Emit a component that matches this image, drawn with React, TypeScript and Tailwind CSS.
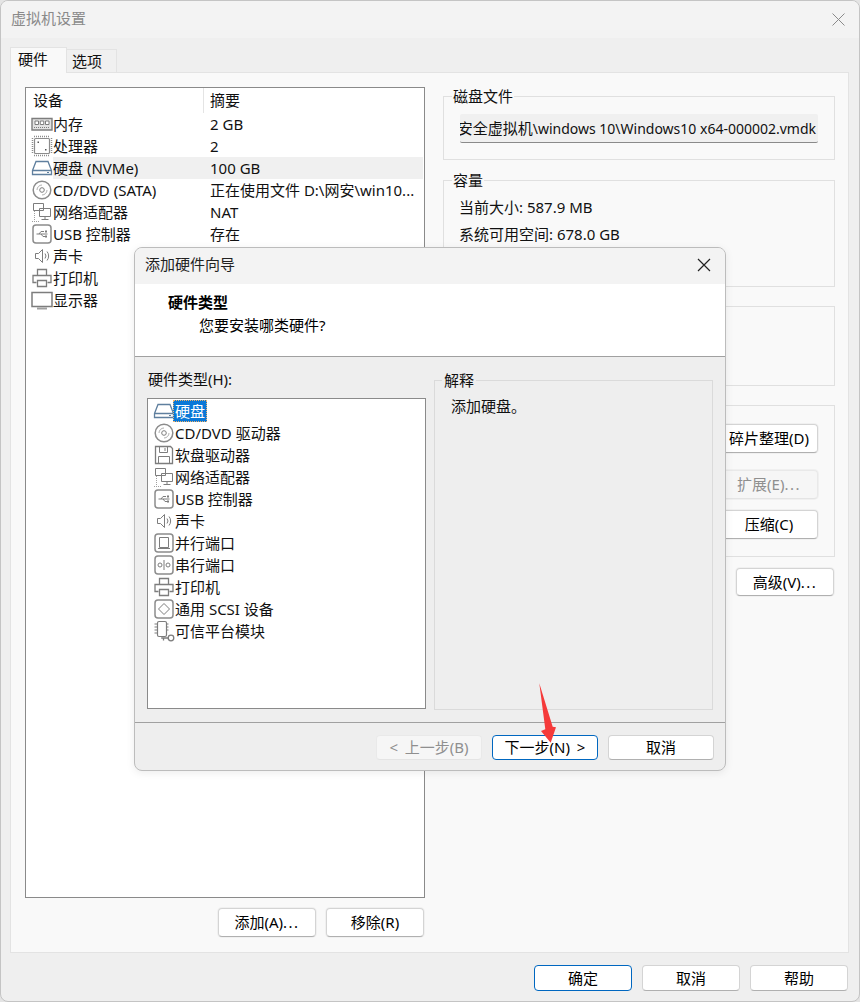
import type { ReactNode } from "react"

const G = "#7d7d7d"

function Ico({ children, className = "" }: { children: ReactNode; className?: string }) {
  return (
    <svg
      width="22"
      height="22"
      viewBox="0 0 22 22"
      fill="none"
      stroke={G}
      strokeWidth="1"
      className={`shrink-0 ${className}`}
    >
      {children}
    </svg>
  )
}

const MemoryIcon = () => (
  <Ico>
    <path d="M1 5.500h20v11.500h-20z" strokeWidth="1.400" fill="#e2e2e2" />
    <path d="M4 8h3.500v3.500h-3.500zM9.250 8h3.500v3.500h-3.500zM14.500 8h3.500v3.500h-3.500z" fill="#fff" />
    <path d="M3 14.500h16" strokeDasharray="1 1" />
  </Ico>
)
const CpuIcon = () => (
  <Ico>
    <rect x="3.500" y="3.500" width="15" height="15" rx="1" strokeWidth="1.200" stroke="#8c8c8c" />
    <path d="M3 1.500h16M3 20.500h16M1.500 3v16M20.500 3v16" strokeDasharray="1 1" strokeWidth="1.500" stroke="#8c8c8c" />
    <path d="M6.500 6.500h1.500v1.500h-1.500zM14 14h1.500v1.500h-1.500z" fill="#555" stroke="none" />
  </Ico>
)
const DiskIcon = () => (
  <Ico>
    <path d="M1.500 13.500L5 4.500h12l3.500 9v4h-19zM1.500 13.500h19" stroke="#5f7f9e" strokeWidth="1.300" />
    <path d="M16 15.500h2" stroke="#5f7f9e" />
  </Ico>
)
const CdIcon = () => (
  <Ico>
    <circle cx="11" cy="11" r="8.800" strokeWidth="1.500" stroke="#8c8c8c" />
    <circle cx="11" cy="11" r="2.300" />
    <path d="M6 11a5 5 0 0 1 5-5M16 11a5 5 0 0 1-5 5" stroke="#b0b0b0" />
  </Ico>
)
const NetIcon = () => (
  <Ico>
    <path d="M2.500 2.500h10v7h-10zM8.500 7.500h11v8h-11zM14 15.500v3M10.500 18.500h7" fill="#fff" />
    <path d="M1 20.500h7M3.500 10v10" strokeDasharray="1 1" stroke="#a0a0a0" />
  </Ico>
)
const UsbIcon = () => (
  <Ico>
    <rect x="2" y="2" width="18" height="18" rx="3" strokeWidth="1.500" stroke="#8c8c8c" />
    <path d="M5.500 11h11M8 11l2-2.500h3M10 11l2 2.500h2" />
    <path d="M14 7.500h2v2h-2zM14 12.500h2v2h-2z" fill={G} stroke="none" />
  </Ico>
)
const SoundIcon = () => (
  <Ico>
    <path d="M4.500 8.500h3l4-4v13l-4-4h-3z" />
    <path d="M14 8.500a4 4 0 0 1 0 5M16 6.500a7 7 0 0 1 0 9" />
  </Ico>
)
const PrinterIcon = () => (
  <Ico>
    <path d="M6.500 8.500v-6h9v6M5.500 15.500h-3.500v-7h18v7h-3.500" strokeWidth="1.300" />
    <path d="M6.500 13.500h9v6h-9z" strokeWidth="1.300" />
  </Ico>
)
const MonitorIcon = () => (
  <Ico>
    <path d="M1 3.500h20v14h-20z" strokeWidth="1.500" />
    <path d="M6 19.500h10" strokeWidth="2" stroke="#a0a0a0" />
  </Ico>
)
const FloppyIcon = () => (
  <Ico>
    <path d="M2.500 2.500h15l2 2v15h-17z" strokeWidth="1.300" />
    <path d="M6.500 2.500v6h8v-6M12 4v3M5.500 19.500v-7h11v7" />
  </Ico>
)
const ParallelIcon = () => (
  <Ico>
    <rect x="2" y="2" width="18" height="18" rx="3" strokeWidth="1.500" stroke="#8c8c8c" />
    <path d="M6.500 5.500h9v10h-9zM5 16.500h12" />
  </Ico>
)
const SerialIcon = () => (
  <Ico>
    <rect x="2" y="2" width="18" height="18" rx="3" strokeWidth="1.500" stroke="#8c8c8c" />
    <circle cx="7" cy="11" r="2" />
    <circle cx="15" cy="11" r="2" />
    <path d="M11 6v10" />
  </Ico>
)
const ScsiIcon = () => (
  <Ico>
    <rect x="2" y="2" width="18" height="18" rx="3" strokeWidth="1.500" stroke="#8c8c8c" />
    <path d="M11 5.500l5.500 5.500-5.500 5.500-5.500-5.500z" />
  </Ico>
)
const TpmIcon = () => (
  <Ico>
    <rect x="4.500" y="1.500" width="9" height="15" rx="1.500" strokeWidth="1.200" />
    <path d="M1.500 4h3M1.500 7h3M1.500 10h3M1.500 13h3M13.500 4h2M13.500 7h2M13.500 10h2" />
    <circle cx="18" cy="18" r="2.800" strokeWidth="1.300" />
    <path d="M15.200 18h-7M10.500 18v2.500" strokeWidth="1.300" />
  </Ico>
)

function Btn({
  children,
  kind = "normal",
  halo = false,
  className = "",
}: {
  children: ReactNode
  kind?: "normal" | "primary" | "disabled"
  halo?: boolean
  className?: string
}) {
  const look =
    kind === "primary"
      ? "border-[#0067c0] border-b-[#0067c0] text-black bg-white"
      : kind === "disabled"
        ? "border-[#e9e9e9] border-b-[#e4e4e4] text-[#8f8f8f] bg-[#f6f6f6]"
        : "border-[#d4d4d4] border-b-[#b0b0b0] text-black bg-white"
  return (
    <button
      className={`flex items-center justify-center rounded-[4px] border whitespace-pre ${look} ${
        halo ? "shadow-[0_0_0_1px_#f0f0f0]" : ""
      } ${className}`}
    >
      {children}
    </button>
  )
}

const Dots = () => <span className="tracking-[1.500px]">...</span>

const devices = [
  { icon: <MemoryIcon />, name: "内存", value: "2 GB" },
  { icon: <CpuIcon />, name: "处理器", value: "2" },
  { icon: <DiskIcon />, name: "硬盘 (NVMe)", value: "100 GB", selected: true },
  { icon: <CdIcon />, name: "CD/DVD (SATA)", value: "正在使用文件 D:\\网安\\win10..." },
  { icon: <NetIcon />, name: "网络适配器", value: "NAT" },
  { icon: <UsbIcon />, name: "USB 控制器", value: "存在" },
  { icon: <SoundIcon />, name: "声卡", value: "" },
  { icon: <PrinterIcon />, name: "打印机", value: "" },
  { icon: <MonitorIcon />, name: "显示器", value: "" },
]

const hardware = [
  { icon: <CdIcon />, name: "CD/DVD 驱动器" },
  { icon: <FloppyIcon />, name: "软盘驱动器" },
  { icon: <NetIcon />, name: "网络适配器" },
  { icon: <UsbIcon />, name: "USB 控制器" },
  { icon: <SoundIcon />, name: "声卡" },
  { icon: <ParallelIcon />, name: "并行端口" },
  { icon: <SerialIcon />, name: "串行端口" },
  { icon: <PrinterIcon />, name: "打印机" },
  { icon: <ScsiIcon />, name: "通用 SCSI 设备" },
  { icon: <TpmIcon />, name: "可信平台模块" },
]

function WizardDialog() {
  return (
    <div className="absolute left-[134px] top-[247px] flex h-[524px] w-[592px] flex-col overflow-hidden rounded-[8px] border border-[#bcbcbc] bg-[#eeeeee] shadow-[0_2px_8px_rgba(0,0,0,0.08)]">
      <div className="flex h-[36px] shrink-0 items-center justify-between bg-[#f3f3f3] pb-[2px] pl-[10px] pr-[14px] text-[#222]">
        <span className="-translate-y-[1px]">添加硬件向导</span>
        <svg width="14" height="14" viewBox="0 0 14 14" stroke="#222" strokeWidth="1.200">
          <path d="M1 1l12 12M13 1L1 13" />
        </svg>
      </div>
      <div className="h-[73px] shrink-0 border-b border-[#a0a0a0] bg-white pl-[33px] pt-[7px] text-black">
        <div className="h-[23px] font-bold leading-[23px]">硬件类型</div>
        <div className="ml-[31px] h-[23px] leading-[23px]">您要安装哪类硬件?</div>
      </div>
      <div className="flex h-[366px] shrink-0 border-b border-[#a0a0a0] px-[12px]">
        <div className="flex w-[279px] shrink-0 flex-col">
          <div className="h-[41px] pl-[1px] pt-[11px] leading-[22px]">硬件类型(H):</div>
          <div className="h-[311px] border border-[#8a8a8a] bg-white pl-[5px] pt-[1px]">
            <div className="flex h-[22px] items-center">
              <DiskIcon />
              <span className="ml-[-2px] flex h-[22px] items-center border border-dotted border-[#f2b36a] bg-[#0a78d7] px-[1px] text-white">
                硬盘
              </span>
            </div>
            {hardware.map((h) => (
              <div key={h.name} className="flex h-[22px] items-center whitespace-nowrap">
                {h.icon}
                <span>{h.name}</span>
              </div>
            ))}
          </div>
        </div>
        <fieldset className="ml-[8px] mt-[13px] h-[340px] w-[280px] min-w-0 border border-[#dadada] pl-[16px]">
          <legend className="ml-[-9px] px-[2px] leading-[20px]">解释</legend>
          <div className="mt-[5px] leading-[22px]">添加硬盘。</div>
        </fieldset>
      </div>
      <div className="flex flex-1 items-start justify-end gap-[10px] pr-[11px] pt-[12px]">
        <Btn kind="disabled" className="h-[25px] w-[106px] [word-spacing:3px]">&lt; 上一步(B)</Btn>
        <Btn kind="primary" className="h-[25px] w-[106px] [word-spacing:3px]">下一步(N) &gt;</Btn>
        <Btn className="h-[25px] w-[106px]">取消</Btn>
      </div>
    </div>
  )
}

export default function App() {
  return (
    <div className="relative h-[1002px] w-[860px] overflow-hidden bg-[#e4e4e4] font-['Noto_Sans','Noto_Sans_CJK_SC',sans-serif] text-[15px] text-[#111]">
      <div className="flex h-[1002px] flex-col overflow-hidden rounded-[8px] border border-[#c4c4c4] bg-[#efefef]">
        <div className="flex h-[37px] shrink-0 items-center justify-between bg-[#f3f3f3] pl-[10px] pr-[14px] text-[#8a8a8a]">
          <span className="-translate-y-[1px]">虚拟机设置</span>
          <svg width="13" height="13" viewBox="0 0 13 13" stroke="#8a8a8a" strokeWidth="1">
            <path d="M.5.5l12 12M12.500.5l-12 12" />
          </svg>
        </div>

        {/* tabs */}
        <div className="flex h-[34px] shrink-0 items-end pl-[9px]">
          <div className="relative z-10 mb-[-1px] flex h-[26px] w-[57px] items-start border border-b-0 border-[#e3e3e3] bg-[#f9f9f9] pl-[7px] leading-[22px]">
            硬件
          </div>
          <div className="flex h-[23px] w-[50px] items-center border border-b-0 border-l-0 border-[#e3e3e3] bg-[#f0f0f0] pl-[5px]">
            选项
          </div>
        </div>

        <div className="ml-[9px] flex h-[881px] w-[839px] shrink-0 border border-[#e3e3e3] bg-[#f9f9f9] pl-[14px] pt-[14px]">
          <div className="flex w-[400px] shrink-0 flex-col">
            <div className="flex h-[811px] flex-col border border-[#8a8a8a] bg-white">
              <div className="flex h-[25px] shrink-0 items-center pl-[7px]">
                <span className="w-[170px]">设备</span>
                <span className="h-[25px] w-[1px] bg-[#e4e4e4]" />
                <span className="pl-[6px]">摘要</span>
              </div>
              {devices.map((d) => (
                <div key={d.name} className="flex h-[22px] shrink-0 items-center whitespace-nowrap pl-[5px]">
                  {d.icon}
                  <div className={`mr-[1px] flex h-[22px] flex-1 items-center ${d.selected ? "bg-[#f0f0f0]" : ""}`}>
                    <span className="w-[157px]">{d.name}</span>
                    <span>{d.value}</span>
                  </div>
                </div>
              ))}
            </div>
            <div className="mt-[10px] flex justify-end gap-[10px] pr-[1px]">
              <Btn halo className="h-[29px] w-[98px]">添加(A)<Dots /></Btn>
              <Btn halo className="h-[29px] w-[98px]">移除(R)</Btn>
            </div>
          </div>

          <div className="ml-[18px] flex w-[392px] shrink-0 flex-col">
            <fieldset className="mt-[-1px] h-[74px] min-w-0 border border-[#e0e0e0] px-[16px]">
              <legend className="ml-[-8px] px-[1px] leading-[20px]">磁盘文件</legend>
              <div className="mt-[8px] flex h-[29px] items-center justify-end overflow-hidden whitespace-nowrap rounded-[2px] border-b border-[#8a8a8a] bg-[#f0f0f0] pr-[2px] text-[14px]">
                <span className="shrink-0">
                  <span className="text-[15px]">安全虚拟机</span>\windows 10\Windows10 x64-000002.vmdk
                </span>
              </div>
            </fieldset>
            <fieldset className="mt-[10px] h-[117px] min-w-0 border border-[#e0e0e0] pl-[15px]">
              <legend className="ml-[-7px] px-[1px] leading-[20px]">容量</legend>
              <div className="mt-[4px] h-[27px] leading-[27px]">当前大小: 587.9 MB</div>
              <div className="h-[27px] leading-[27px]">系统可用空间: 678.0 GB</div>
            </fieldset>
            <div className="mt-[19px] h-[80px] shrink-0 border border-[#e0e0e0]" />
            <div className="mt-[19px] flex h-[152px] shrink-0 flex-col items-end border border-[#e0e0e0] pr-[16px] pt-[18px]">
              <Btn halo className="h-[29px] w-[98px]">碎片整理(D)</Btn>
              <Btn halo kind="disabled" className="mt-[17px] h-[29px] w-[98px]">扩展(E)<Dots /></Btn>
              <Btn halo className="mt-[11px] h-[29px] w-[98px]">压缩(C)</Btn>
            </div>
            <div className="mt-[11px] flex justify-end pr-[1px]">
              <Btn halo className="h-[28px] w-[98px]">高级(V)<Dots /></Btn>
            </div>
          </div>
        </div>

        <div className="flex flex-1 items-start justify-end gap-[10px] pr-[11px] pt-[12px]">
          <Btn kind="primary" className="h-[26px] w-[98px]">确定</Btn>
          <Btn className="h-[26px] w-[98px]">取消</Btn>
          <Btn className="h-[26px] w-[98px]">帮助</Btn>
        </div>
      </div>

      <WizardDialog />

      {/* annotation arrow */}
      <svg className="absolute left-[530px] top-[680px]" width="40" height="70" viewBox="530 680 40 70">
        <polygon points="539.3,683.300 552.700,726.700 556,727.300 550.700,742.700 541,731 545.300,729.300" fill="#f53a3a" />
      </svg>
    </div>
  )
}
